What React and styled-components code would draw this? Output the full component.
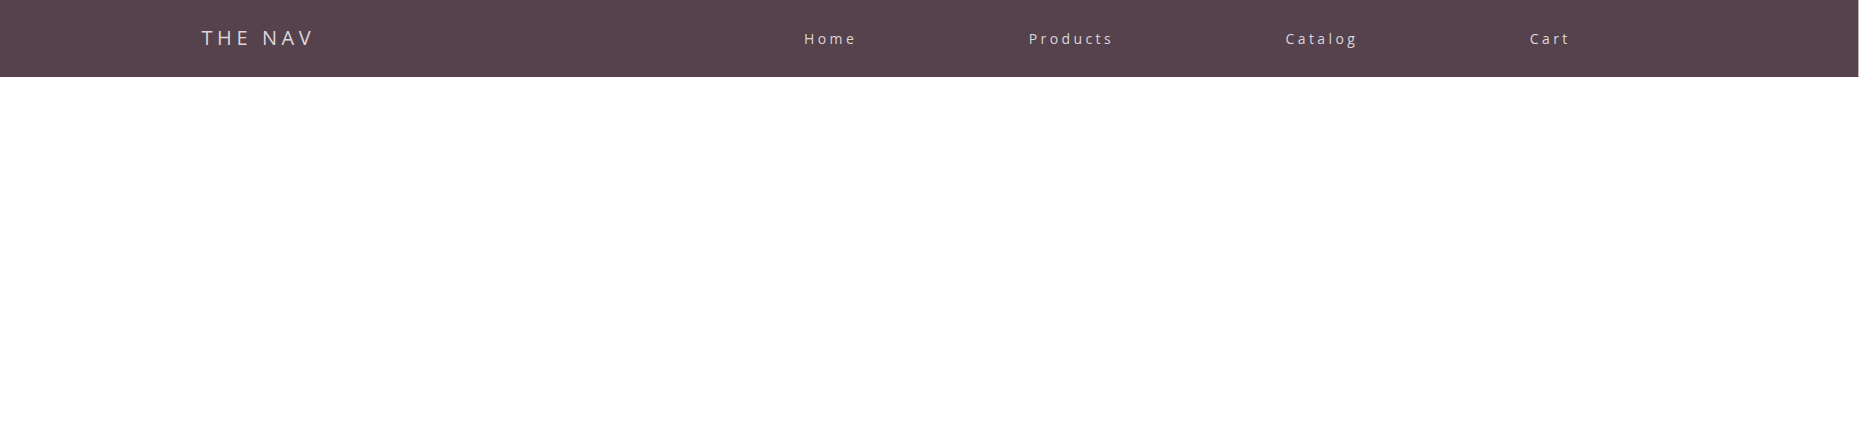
import React from 'react';
import styled, { createGlobalStyle } from 'styled-components';

const GlobalStyle = createGlobalStyle`
  * {
    margin: 0;
    padding: 0;
    box-sizing: border-box;
  }
  body {
    background: #ffffff;
    font-family: "Open Sans", "Noto Sans", sans-serif;
  }
`

const links = ['Home', 'Products', 'Catalog', 'Cart'];

const App = () => {
  return (
    <>
      <GlobalStyle />
      <Nav>
        <Logo>The Nav</Logo>
        <NavLinks>
          {links.map((label) => (
            <li key={label}>
              <NavLink href="#">{label}</NavLink>
            </li>
          ))}
        </NavLinks>
      </Nav>
    </>
  )
}

const Nav = styled.nav`
  display: flex;
  justify-content: space-around;
  align-items: center;
  height: 77px;
  padding-bottom: 2px;
  background-color: #55424d;
  border-right: 1px solid #bfaeb8;
  font-family: "Open Sans", "Noto Sans", sans-serif;
`
const Logo = styled.h4`
  color: #dcd6d9;
  text-transform: uppercase;
  letter-spacing: 4.6px;
  font-size: 20px;
  font-weight: 500;
`
const NavLinks = styled.ul`
  display: flex;
  justify-content: space-around;
  width: 50.5%;
  list-style: none;
`
const NavLink = styled.a`
  color: #dcd6d9;
  text-decoration: none;
  letter-spacing: 3.4px;
  font-size: 14px;
  font-weight: 500;
`

export default App;
